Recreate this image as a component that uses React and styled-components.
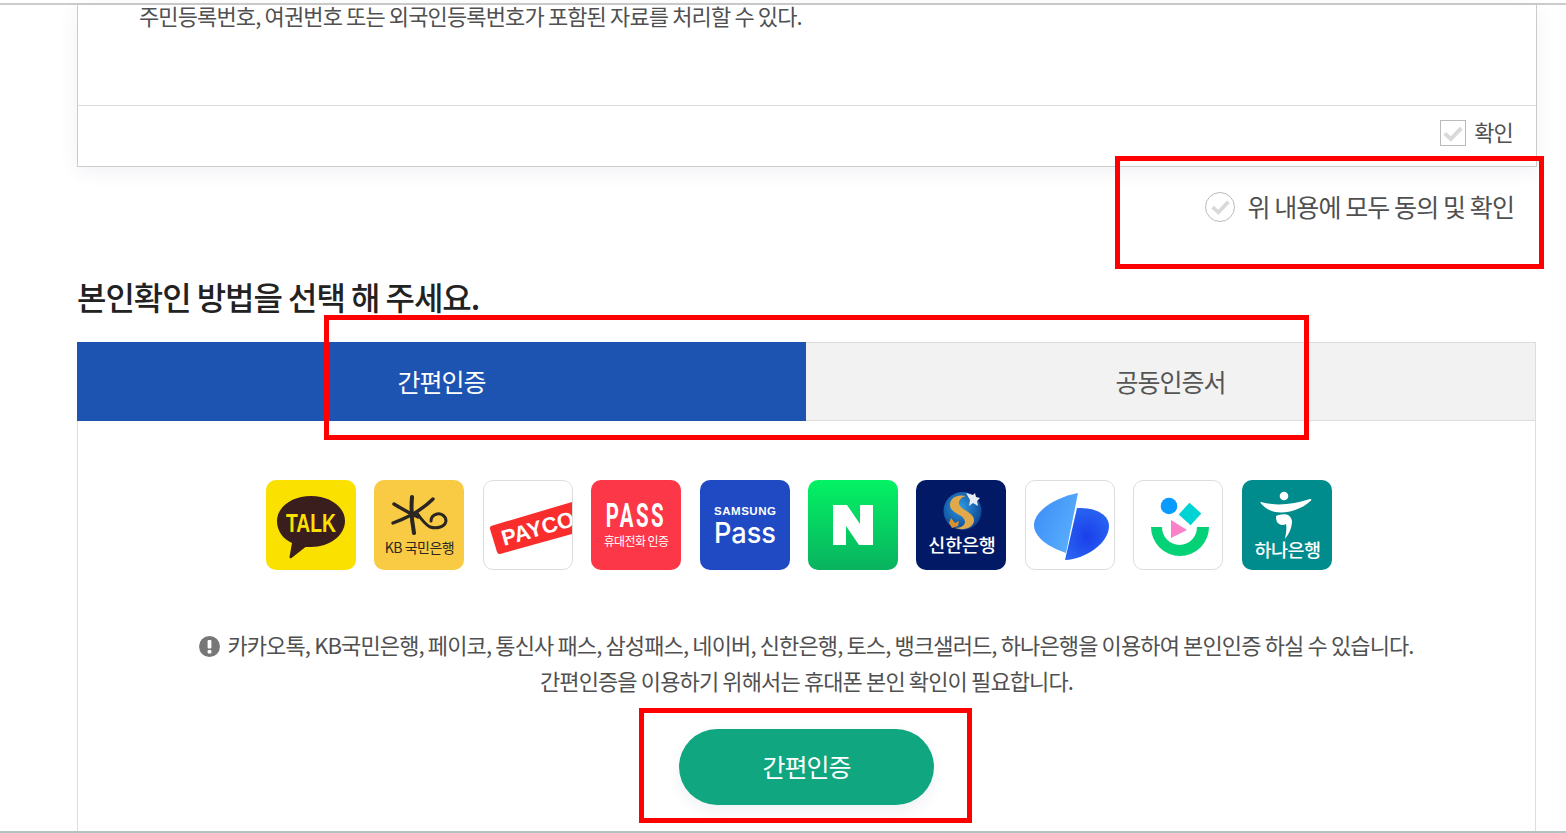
import React from "react";
import styled, { createGlobalStyle } from "styled-components";

const GlobalStyle = createGlobalStyle`
  html, body {
    margin: 0;
    padding: 0;
    background: #fff;
    overflow: hidden;
  }
  body {
    font-family: "Noto Sans CJK KR", "Noto Sans", sans-serif;
    color: #555;
  }
`;

const Page = styled.div`
  position: relative;
  width: 1566px;
  height: 833px;
  overflow: hidden;
  padding-top: 3px;
  box-sizing: border-box;
  border-bottom: 2px solid #b5c0c0;
`;

const TopLine = styled.div`
  height: 2px;
  background: #ccc;
`;

const Content = styled.div`
  margin: 0 29px 0 77px;
`;

const TermsCard = styled.div`
  border: 1px solid #ccc;
  border-top: 0;
  height: 162px;
  box-sizing: border-box;
  background: #fff;
  box-shadow: 0 4px 18px rgba(60, 80, 120, 0.08);
`;

const TermsBody = styled.div`
  height: 101px;
  padding-left: 61px;
  box-sizing: border-box;
  font-size: 22px;
  line-height: 20px;
  letter-spacing: -0.87px;
  color: #505050;
  border-bottom: 1px solid #ddd;
`;

const TermsFoot = styled.div`
  display: flex;
  align-items: center;
  justify-content: flex-end;
  gap: 8px;
  height: 54px;
  padding-right: 23px;
  font-size: 22px;
  letter-spacing: -0.87px;
  color: #505050;
`;

const FootLabel = styled.span`
  position: relative;
  top: -2px;
`;

const CheckBox = styled.span`
  display: flex;
  align-items: center;
  justify-content: center;
  width: 26px;
  height: 26px;
  border: 1px solid #bbb;
  box-sizing: border-box;
`;

const AgreeRow = styled.div`
  display: flex;
  align-items: center;
  justify-content: flex-end;
  gap: 12px;
  height: 79px;
  padding-right: 23px;
  font-size: 25px;
  letter-spacing: -0.9px;
  color: #505050;
`;

const AgreeLabel = styled.span`
  position: relative;
  top: -1px;
`;

const CheckCircle = styled.span`
  display: flex;
  align-items: center;
  justify-content: center;
  width: 30px;
  height: 30px;
  border: 1px solid #bbb;
  border-radius: 50%;
  box-sizing: border-box;
`;

const Heading = styled.h2`
  margin: 10px 0 0;
  height: 86px;
  box-sizing: border-box;
  font-size: 32px;
  line-height: 80px;
  font-weight: 500;
  letter-spacing: -1.05px;
  color: #222;
`;

const Tabs = styled.div`
  display: flex;
  height: 79px;
  margin-right: 1px;
`;

const Tab = styled.div`
  flex: 1;
  display: flex;
  align-items: center;
  justify-content: center;
  box-sizing: border-box;
  padding-bottom: 1px;
  font-size: 25px;
  letter-spacing: -1px;
  color: ${(p) => (p.$active ? "#fff" : "#555")};
  background: ${(p) => (p.$active ? "#1e54b1" : "#f2f2f2")};
  border: ${(p) => (p.$active ? "0" : "1px solid #ddd")};
  border-left: 0;
`;

const Panel = styled.div`
  margin-right: 1px;
  height: 412px;
  box-sizing: border-box;
  border: 1px solid #ddd;
  border-top: 0;
  border-bottom: 0;
  padding-top: 59px;
  display: flex;
  flex-direction: column;
  align-items: center;
`;

const Logos = styled.div`
  display: flex;
  gap: 18.4px;
  padding-right: 15.4px;
`;

const Logo = styled.div`
  width: 90px;
  height: 90px;
  border-radius: 10px;
  overflow: hidden;
  box-sizing: border-box;
  background: ${(p) => p.$bg || "#fff"};
  border: ${(p) => (p.$line ? "1px solid #ddd" : "0")};
  svg {
    display: block;
    width: 100%;
    height: 100%;
  }
`;

const Notice = styled.div`
  margin-top: 56px;
  font-size: 22px;
  line-height: 36px;
  letter-spacing: -0.87px;
  color: #505050;
  text-align: center;
`;

const NoticeIcon = styled.span`
  display: inline-flex;
  vertical-align: -3px;
  margin-right: 7px;
`;

const MainButton = styled.button`
  margin-top: 31px;
  width: 255px;
  height: 76px;
  padding: 0 0 3px;
  border: 0;
  border-radius: 38px;
  background: #10a67f;
  color: #fff;
  font-family: inherit;
  font-size: 25px;
  letter-spacing: -1px;
  box-shadow: 0 6px 14px rgba(60, 80, 120, 0.08);
`;

const Annotation = styled.div`
  position: absolute;
  box-sizing: border-box;
  border: 5px solid #fe0000;
  left: ${(p) => p.$x}px;
  top: ${(p) => p.$y}px;
  width: ${(p) => p.$w}px;
  height: ${(p) => p.$h}px;
  pointer-events: none;
`;

const Check = ({ size }) => (
  <svg width={size} height={size} viewBox="0 0 20 20">
    <path d="M2.5 10.5l5.5 5 9.5-10" fill="none" stroke="#d9d9d9" strokeWidth="3.6" />
  </svg>
);

const KakaoLogo = () => (
  <svg viewBox="0 0 90 90">
    <path d="M45 16C26 16 11 27 11 41c0 10 6 18 15 22l-2.5 14c0 1.500 1 1.500 2 1l14-11h5.500c19 0 34-12 34-26S64 16 45 16z" fill="#3a1d1d" />
    <text x="45" y="52" textAnchor="middle" fontFamily="Liberation Sans" fontWeight="700" fontSize="25" textLength="50" lengthAdjust="spacingAndGlyphs" fill="#fae100">TALK</text>
  </svg>
);

const KbLogo = () => (
  <svg viewBox="0 0 90 90">
    <g fill="none" stroke="#2a2622" strokeLinecap="round">
      <path d="M38 17c-1 12 0 26 2 36" strokeWidth="4" />
      <path d="M20 24c8 5 15 9 24 13" strokeWidth="3.4" />
      <path d="M19 43c14-5 28-12 40-24" strokeWidth="3.4" />
      <path d="M43 33c4 6 8 11 13 14 7 2 15 0 16-6 0-5-5-8-9-7-4 1-6 4-6 7" strokeWidth="3" />
    </g>
    <text x="45.5" y="73" textAnchor="middle" fontFamily="Noto Sans CJK KR" fontSize="14" letterSpacing="-0.5" fill="#2a2622">KB 국민은행</text>
  </svg>
);

const PaycoLogo = () => (
  <svg viewBox="0 0 88 88">
    <path d="M7 45L88 21v32L16 73q-2 .5-3-2L6 48q-.5-2 1-3z" fill="#fa2d2d" />
    <text x="20" y="65" transform="rotate(-16 20 65)" fontFamily="Liberation Sans" fontWeight="700" fontSize="22" fill="#fff">PAYCO</text>
  </svg>
);

const PassLogo = () => (
  <svg viewBox="0 0 90 90">
    <text x="72.6" y="47" transform="scale(0.62 1)" textAnchor="middle" fontFamily="Roboto" fontWeight="700" fontSize="33" letterSpacing="4" fill="#fff">PASS</text>
    <text x="45" y="66" textAnchor="middle" fontFamily="Noto Sans CJK KR" fontSize="12" letterSpacing="-0.6" fill="#fff">휴대전화 인증</text>
  </svg>
);

const SamsungLogo = () => (
  <svg viewBox="0 0 90 90">
    <text x="45" y="35" textAnchor="middle" fontFamily="Liberation Sans" fontWeight="700" fontSize="11.500" textLength="62" lengthAdjust="spacing" fill="#fff">SAMSUNG</text>
    <text x="45" y="63" textAnchor="middle" fontFamily="Inter" fontWeight="500" fontSize="29" textLength="62" lengthAdjust="spacingAndGlyphs" fill="#fff">Pass</text>
  </svg>
);

const NaverLogo = () => (
  <svg viewBox="0 0 90 90">
    <defs>
      <linearGradient id="naverBg" x1="0" y1="0" x2="0" y2="1">
        <stop offset="0" stopColor="#04f264" />
        <stop offset="1" stopColor="#08b25f" />
      </linearGradient>
    </defs>
    <rect width="90" height="90" fill="url(#naverBg)" />
    <path d="M25 25h14l13 19V25h13v40H51L38 46v19H25z" fill="#fff" />
  </svg>
);

const ShinhanLogo = () => (
  <svg viewBox="0 0 90 90">
    <defs>
      <radialGradient id="shBall" cx="0.45" cy="0.4" r="0.65">
        <stop offset="0" stopColor="#2f9be4" />
        <stop offset="1" stopColor="#0a3f8c" />
      </radialGradient>
    </defs>
    <circle cx="46.500" cy="31" r="19" fill="url(#shBall)" />
    <path d="M50 16c-9-2-16 2-16 9 0 9 15 9 15 17 0 3-4 6-10 6 9 3 18 0 19-7 1-9-15-11-15-18 0-3 3-6 7-7z" fill="#e0a94c" />
    <path d="M35 38l4 5 4-2-1 5-6 2-3-5z" fill="#d8912f" />
    <path d="M50 13l7 2 2-2 1 4 4 1-3 3 1 5-5-3-4 3 1-6z" fill="#e8edf5" />
    <text x="46" y="72" textAnchor="middle" fontFamily="Noto Sans CJK KR" fontWeight="500" fontSize="18.500" letterSpacing="-0.2" fill="#fff">신한은행</text>
  </svg>
);

const TossLogo = () => (
  <svg viewBox="0 0 88 88">
    <defs>
      <linearGradient id="tossA" x1="0" y1="0" x2="1" y2="0.6">
        <stop offset="0" stopColor="#3b8af7" />
        <stop offset="1" stopColor="#58aefc" />
      </linearGradient>
      <radialGradient id="tossB" cx="0.5" cy="0.55" r="0.6">
        <stop offset="0" stopColor="#1a3fea" />
        <stop offset="1" stopColor="#2a66f2" />
      </radialGradient>
    </defs>
    <path d="M51 27c17-1 32 6 32 18 0 17-23 33-44 34z" fill="url(#tossB)" />
    <path d="M52 12C30 16 8 30 8 44c0 12 14 22 32 28z" fill="url(#tossA)" />
  </svg>
);

const BankSaladLogo = () => (
  <svg viewBox="0 0 88 88">
    <circle cx="35" cy="25" r="8.300" fill="#0a9bff" />
    <rect x="48" y="25" width="16" height="16" transform="rotate(42 56 33)" fill="#00d3d3" />
    <path d="M37 39l16 10-16 8z" fill="#fa80c8" />
    <path d="M17 46h11a17.500 18 0 0 0 35 0h12a29 29 0 0 1-58 0z" fill="#05d277" />
  </svg>
);

const HanaLogo = () => (
  <svg viewBox="0 0 90 90">
    <circle cx="42" cy="16" r="4.300" fill="#fff" />
    <path d="M19 22c13 4 32 3 49-3 1 0 2 1 1 1.500-8 8-21 12-30 12-9 0-16-4-20-9-1-1 0-2 0-1.500z" fill="#fff" />
    <path d="M34 36c6-3 15-3 16 5 0 7-3 13-7 18 1-6 2-11 1-15-3 2-7 1-9-2-1-2-1-5-1-6z" fill="#fff" />
    <text x="45.500" y="77" textAnchor="middle" fontFamily="Noto Sans CJK KR" fontWeight="500" fontSize="18.500" letterSpacing="-0.5" fill="#fff">하나은행</text>
  </svg>
);

const logos = [
  { id: "kakao", bg: "#fae100", art: <KakaoLogo /> },
  { id: "kb", bg: "#f9cb45", art: <KbLogo /> },
  { id: "payco", line: true, art: <PaycoLogo /> },
  { id: "pass", bg: "#fb3748", art: <PassLogo /> },
  { id: "samsung", bg: "#204ac4", art: <SamsungLogo /> },
  { id: "naver", art: <NaverLogo /> },
  { id: "shinhan", bg: "#021a66", art: <ShinhanLogo /> },
  { id: "toss", line: true, art: <TossLogo /> },
  { id: "banksalad", line: true, art: <BankSaladLogo /> },
  { id: "hana", bg: "#008c8c", art: <HanaLogo /> },
];

export default function App() {
  return (
    <Page>
      <GlobalStyle />
      <TopLine />
      <Content>
        <TermsCard>
          <TermsBody>주민등록번호, 여권번호 또는 외국인등록번호가 포함된 자료를 처리할 수 있다.</TermsBody>
          <TermsFoot>
            <CheckBox><Check size={22} /></CheckBox>
            <FootLabel>확인</FootLabel>
          </TermsFoot>
        </TermsCard>
        <AgreeRow>
          <CheckCircle><Check size={21} /></CheckCircle>
          <AgreeLabel>위 내용에 모두 동의 및 확인</AgreeLabel>
        </AgreeRow>
        <Heading>본인확인 방법을 선택 해 주세요.</Heading>
        <Tabs>
          <Tab $active>간편인증</Tab>
          <Tab>공동인증서</Tab>
        </Tabs>
        <Panel>
          <Logos>
            {logos.map((l) => (
              <Logo key={l.id} $bg={l.bg} $line={l.line}>{l.art}</Logo>
            ))}
          </Logos>
          <Notice>
            <NoticeIcon>
              <svg width="21" height="21" viewBox="0 0 21 21">
                <circle cx="10.500" cy="10.500" r="10.500" fill="#777" />
                <rect x="8.600" y="4" width="3.800" height="8.500" rx="1" fill="#fff" />
                <rect x="8.600" y="14" width="3.800" height="3.400" rx="1" fill="#fff" />
              </svg>
            </NoticeIcon>
            카카오톡, KB국민은행, 페이코, 통신사 패스, 삼성패스, 네이버, 신한은행, 토스, 뱅크샐러드, 하나은행을 이용하여 본인인증 하실 수 있습니다.
            <br />
            간편인증을 이용하기 위해서는 휴대폰 본인 확인이 필요합니다.
          </Notice>
          <MainButton>간편인증</MainButton>
        </Panel>
      </Content>
      <Annotation $x={1115} $y={156} $w={429} $h={113} />
      <Annotation $x={324} $y={315} $w={985} $h={125} />
      <Annotation $x={639} $y={708} $w={333} $h={115} />
    </Page>
  );
}
